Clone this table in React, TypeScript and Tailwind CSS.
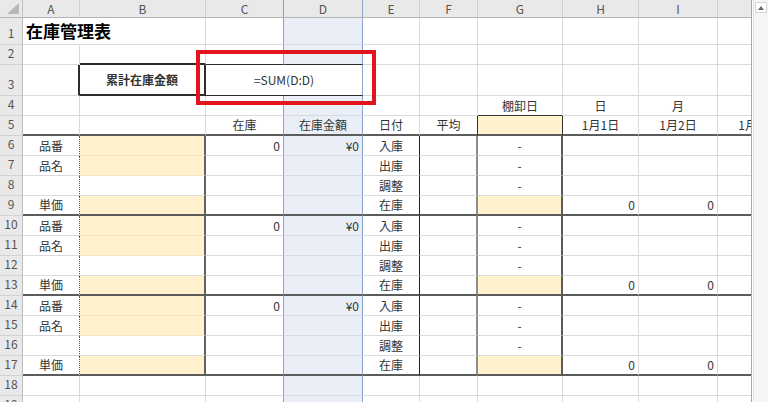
import React from "react";

type Spec = {
  t?: string;
  a?: "l" | "c" | "r";
  bg: string;
  r: string;
  b: string;
  x?: string;
  span?: boolean;
  skip?: boolean;
};

const COLS = ["A", "B", "C", "D", "E", "F", "G", "H", "I", "J"];
const ROWS = Array.from({ length: 19 }, (_, i) => i + 1);

const GR = "border-r border-r-[#dadada]";
const GB = "border-b border-b-[#dadada]";
const SEL = "border-r border-r-[#8ba4c4]";
const THICK = "border-b-2 border-b-[#5c5c5c]";
const YEL = "bg-[#fff2cc]";
const YEL_B = "border-b border-b-[#f3e7c8]";

const ITEM = ["品番", "品名", "", "単価"];
const MOVE = ["入庫", "出庫", "調整", "在庫"];

function spec(row: number, c: number): Spec {
  const s: Spec = {
    a: "c",
    bg: c === 3 ? "bg-[#e9eef7]" : "bg-white",
    r: c === 2 || c === 3 ? SEL : GR,
    b: c === 3 ? "border-b border-b-[#d5dbe5]" : GB,
  };

  if (row === 1 && c === 0) {
    s.t = "在庫管理表";
    s.a = "l";
    s.r = "border-r border-r-transparent";
    s.x = "relative z-10 text-[17px] font-bold text-black";
  }

  if (row === 2) {
    if (c === 1) s.b = "border-b-2 border-b-[#2e2e2e]";
    if (c === 2 || c === 3) s.b = "border-b border-b-[#2e2e2e]";
  }

  if (row === 3) {
    if (c === 0) s.r = "border-r-2 border-r-[#2e2e2e]";
    if (c === 1) {
      s.t = "累計在庫金額";
      s.r = "border-r-2 border-r-[#2e2e2e]";
      s.b = "border-b-2 border-b-[#2e2e2e]";
      s.x = "font-bold text-[#222]";
    }
    if (c === 2) {
      s.t = "=SUM(D:D)";
      s.span = true;
      s.bg = "bg-white";
      s.r = SEL;
      s.b = "border-b border-b-[#2e2e2e]";
    }
    if (c === 3) s.skip = true;
  }

  if (row === 4) {
    if (c === 6) {
      s.t = "棚卸日";
      s.b = "border-b border-b-[#333]";
    }
    if (c === 7) s.t = "日";
    if (c === 8) s.t = "月";
  }

  if (row === 5) {
    s.b = THICK;
    const heads: Record<number, string> = {
      2: "在庫",
      3: "在庫金額",
      4: "日付",
      5: "平均",
      7: "1月1日",
      8: "1月2日",
      9: "1月3日",
    };
    s.t = heads[c];
    if (c === 5) s.r = "border-r border-r-[#333]";
    if (c === 6) {
      s.bg = YEL;
      s.r = "border-r border-r-[#333]";
    }
  }

  if (row >= 6 && row <= 17) {
    const k = (row - 6) % 4;
    const last = k === 3;
    if (c === 0) {
      s.t = ITEM[k];
      s.r = "border-r border-r-[#555] [border-right-style:dotted]";
    }
    if (c === 1) {
      s.r = "border-r-2 border-r-[#626262]";
      if (k !== 2) {
        s.bg = YEL;
        s.b = YEL_B;
      }
    }
    if (c === 2 && k === 0) {
      s.t = "0";
      s.a = "r";
    }
    if (c === 3 && k === 0) {
      s.t = "¥0";
      s.a = "r";
    }
    if (c === 4) {
      s.t = MOVE[k];
      s.r = "border-r border-r-[#222]";
    }
    if (c === 5) s.r = "border-r-2 border-r-[#8c8c8c]";
    if (c === 6) {
      s.r = "border-r-2 border-r-[#5a5a5a]";
      if (last) {
        s.bg = YEL;
        s.b = YEL_B;
      } else s.t = "-";
    }
    if ((c === 7 || c === 8) && last) {
      s.t = "0";
      s.a = "r";
    }
    if (last) s.b = THICK;
  }

  return s;
}

function Cell({ s }: { s: Spec }) {
  const justify =
    s.a === "l" ? "justify-start" : s.a === "r" ? "justify-end" : "justify-center";
  return (
    <div
      className={`${s.bg} ${s.r} ${s.b} ${justify} ${s.span ? "col-span-2" : ""} flex items-center px-[3px] text-[12px] text-[#333] whitespace-nowrap ${s.x ?? ""}`}
    >
      {s.t}
    </div>
  );
}

export default function App() {
  return (
    <div className="relative flex w-[768px] h-[402px] overflow-hidden bg-white font-['Noto_Sans_CJK_JP','Noto_Sans',sans-serif]">
      <div className="w-[751px] h-full overflow-hidden">
        <div className="grid w-[797px] grid-cols-[23px_57px_126px_78px_79px_57px_58px_85px_76px_79px_79px] grid-rows-[18px_27px_20px_31px_20px_20px_repeat(14,20px)]">
          <div className="bg-[#e9e9e9] border-r border-r-[#bdbdbd] border-b border-b-[#b5b5b5]">
            <svg width="22" height="17" viewBox="0 0 22 17">
              <polygon points="19,3 19,14 7,14" fill="#b7b7b7" />
            </svg>
          </div>
          {COLS.map((col, i) => (
            <div
              key={col}
              className={`bg-[#e9e9e9] border-b border-b-[#b5b5b5] flex items-center justify-center text-[12px] text-[#555] ${i === 2 || i === 3 ? SEL : "border-r border-r-[#cfcfcf]"}`}
            >
              {col}
            </div>
          ))}
          {ROWS.map((row) => (
            <React.Fragment key={row}>
              <div className="bg-[#e9e9e9] border-r border-r-[#bdbdbd] border-b border-b-[#d2d2d2] flex items-end justify-center pb-[2px] text-[12px] text-[#555]">
                {row}
              </div>
              {COLS.map((col, c) => {
                const s = spec(row, c);
                if (s.skip) return null;
                return <Cell key={col} s={s} />;
              })}
            </React.Fragment>
          ))}
        </div>
      </div>

      <div className="w-[17px] h-full border-l border-l-[#a8a8a8] bg-white pl-[1px]">
        <div className="h-full bg-[#f5f5f5] border-l border-l-[#e2e2e2] pt-[2px] px-[1px]">
          <div className="h-[11px] bg-white border border-[#d6d6d6] flex items-center justify-center">
            <svg width="6" height="4" viewBox="0 0 6 4">
              <polygon points="3,0 6,4 0,4" fill="#666" />
            </svg>
          </div>
        </div>
      </div>

      <div className="pointer-events-none absolute left-[196px] top-[50px] w-[180px] h-[55px] border-4 border-[#e1151d]" />
    </div>
  );
}
